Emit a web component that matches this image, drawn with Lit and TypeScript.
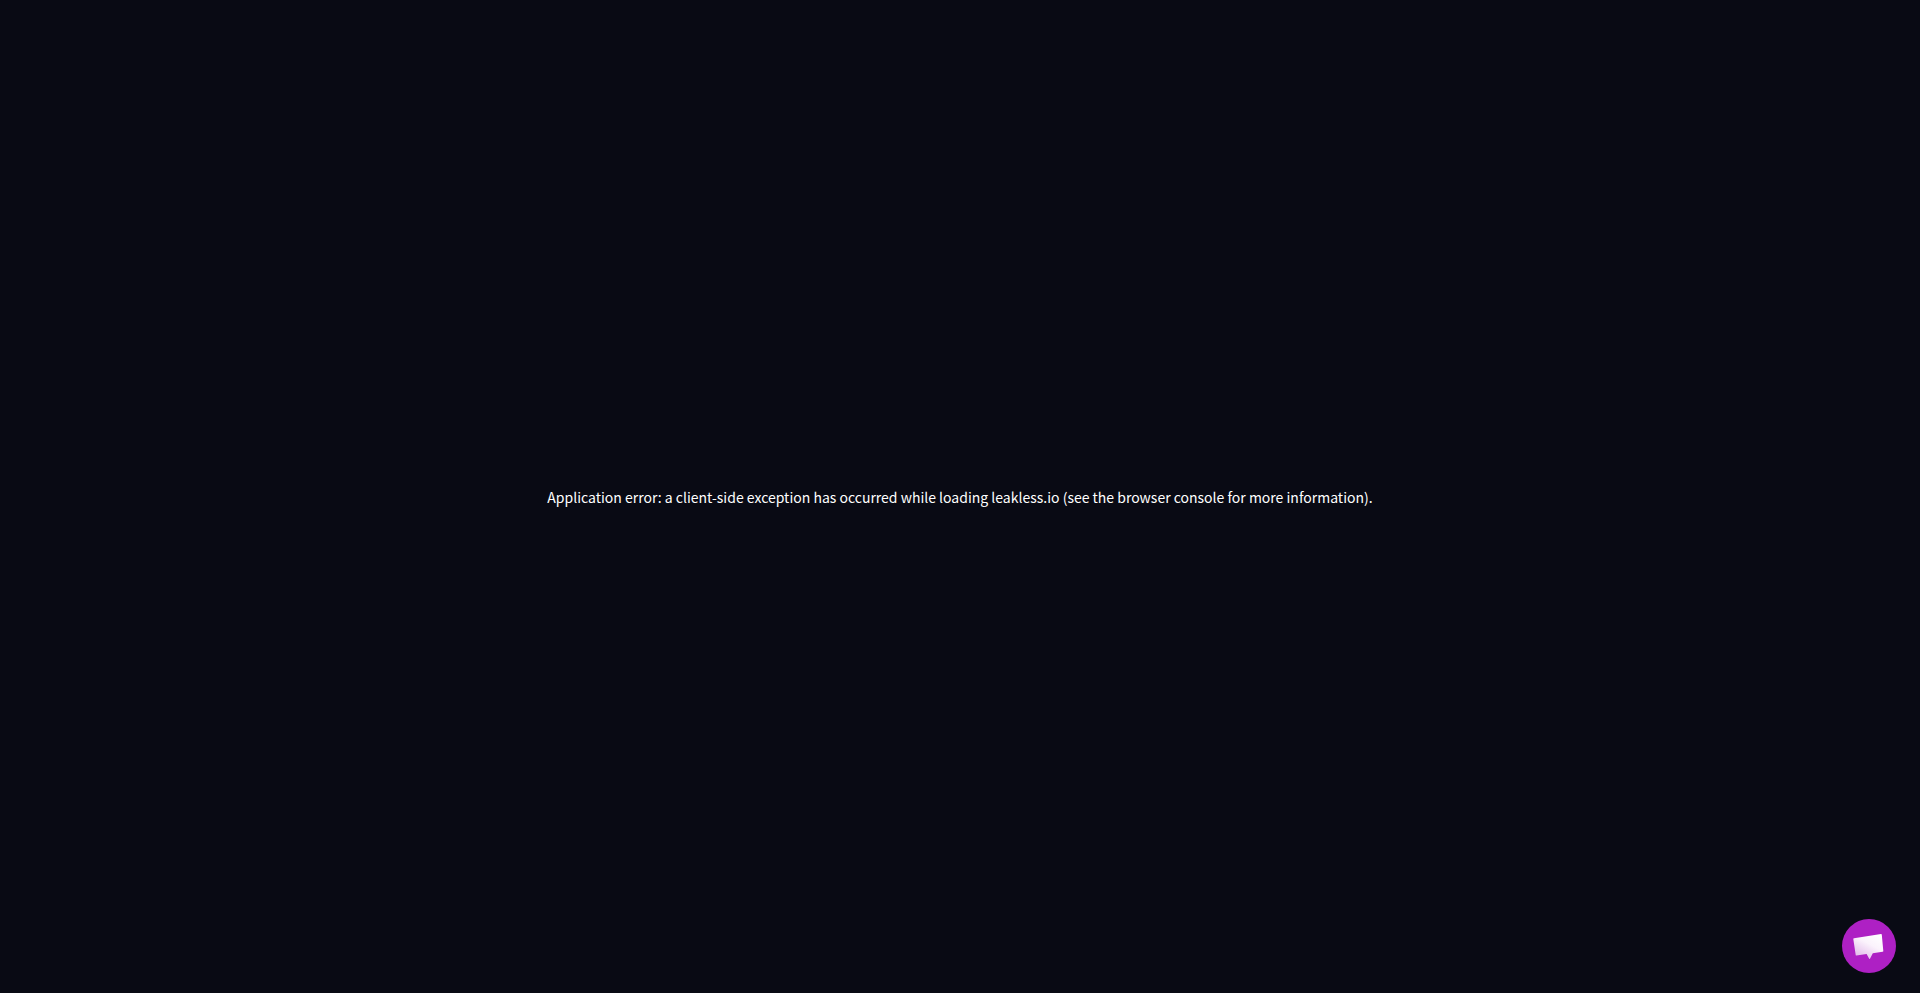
import { LitElement, html, css } from "lit";
import { customElement } from "lit/decorators.js";

@customElement("app-root")
export class AppRoot extends LitElement {
  static styles = css`
    :host {
      display: flex;
      align-items: center;
      justify-content: center;
      height: 993px;
      background: #090a14;
      overflow: hidden;
    }
    .msg {
      margin: 0;
      color: #ffffff;
      font-family: "Noto Sans CJK SC", "Noto Sans", sans-serif;
      font-size: 14px;
      line-height: 20px;
    }
    .chat {
      position: fixed;
      right: 24px;
      bottom: 20px;
      width: 54px;
      height: 54px;
      border-radius: 50%;
      background: #ae20c4;
      display: flex;
      align-items: center;
      justify-content: center;
    }
    svg { display: block; }
  `;

  render() {
    return html`
      <p class="msg">Application error: a client-side exception has occurred while loading leakless.io (see the browser console for more information).</p>
      <div class="chat">
        <svg width="40" height="40" viewBox="0 0 40 40">
          <defs>
            <linearGradient id="g" x1="0.8" y1="0" x2="0.15" y2="1">
              <stop offset="0" stop-color="#ffffff" />
              <stop offset="0.4" stop-color="#fbf3fc" />
              <stop offset="1" stop-color="#dfb4e8" />
            </linearGradient>
          </defs>
          <path
            d="M5 12.2 L32 8.1 Q32.7 8 32.8 8.8 L34.3 25 Q34.4 25.6 33.6 25.8 L23.8 27.2 L21.1 32.6 Q20.7 33.3 20.2 32.7 L17.6 28.1 L7.5 29.6 Q6.8 29.7 6.7 29 L4.3 13 Q4.2 12.3 5 12.2 Z"
            fill="url(#g)"
          />
        </svg>
      </div>
    `;
  }
}
